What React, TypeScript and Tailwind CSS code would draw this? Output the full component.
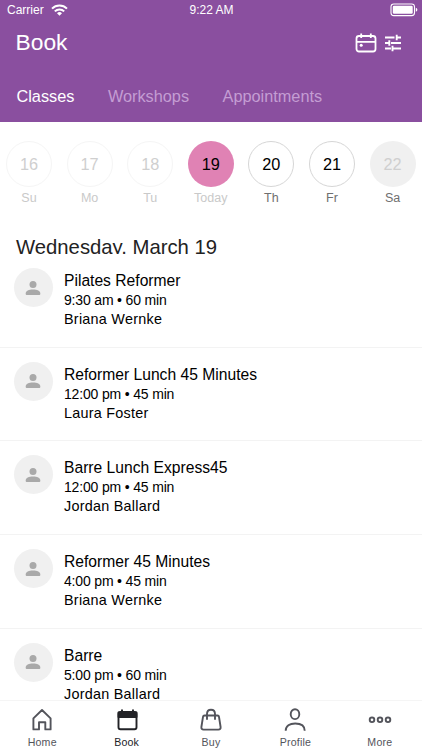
import type { ReactNode } from "react"

const days = [
  { num: 16, label: "Su", circle: "border border-[#f5f5f5] text-[#cfcfcf]", text: "text-[#c9c9c9]" },
  { num: 17, label: "Mo", circle: "border border-[#f5f5f5] text-[#cfcfcf]", text: "text-[#c9c9c9]" },
  { num: 18, label: "Tu", circle: "border border-[#f5f5f5] text-[#cfcfcf]", text: "text-[#c9c9c9]" },
  { num: 19, label: "Today", circle: "bg-[#e082b4] text-black", text: "text-[#c9c9c9]" },
  { num: 20, label: "Th", circle: "border border-[#d6d6d6] text-black", text: "text-[#6f6f6f]" },
  { num: 21, label: "Fr", circle: "border border-[#d6d6d6] text-black", text: "text-[#6f6f6f]" },
  { num: 22, label: "Sa", circle: "bg-[#f0f0f0] text-[#cfcfcf]", text: "text-[#6f6f6f]" },
]

const classes = [
  { name: "Pilates Reformer", time: "9:30 am • 60 min", teacher: "Briana Wernke" },
  { name: "Reformer Lunch 45 Minutes", time: "12:00 pm • 45 min", teacher: "Laura Foster" },
  { name: "Barre Lunch Express45", time: "12:00 pm • 45 min", teacher: "Jordan Ballard" },
  { name: "Reformer 45 Minutes", time: "4:00 pm • 45 min", teacher: "Briana Wernke" },
  { name: "Barre", time: "5:00 pm • 60 min", teacher: "Jordan Ballard" },
]

function StatusBar() {
  return (
    <div className="flex h-5 items-center justify-between text-[12px] leading-5">
      <div className="flex flex-1 items-center gap-[7px] pl-[7px]">
        <span>Carrier</span>
        <svg width="17" height="12" viewBox="0 0 17 12" fill="none" stroke="white" strokeWidth="2">
          <path d="M1 4.6a10.6 10.6 0 0 1 15 0" />
          <path d="M3.8 7.4a6.6 6.6 0 0 1 9.4 0" />
          <path d="M8.5 11.8 6 9.3a3.5 3.5 0 0 1 5 0z" fill="white" stroke="none" />
        </svg>
      </div>
      <span className="pr-[2px]">9:22 AM</span>
      <div className="flex flex-1 justify-end pr-[4px]">
        <svg width="28" height="14" viewBox="0 0 28 14">
          <rect x="1" y="1" width="23.5" height="11.6" rx="2.8" fill="none" stroke="white" strokeWidth="1.1" />
          <rect x="2.8" y="2.8" width="19.9" height="8" rx="1.2" fill="white" />
          <path d="M25.8 4.8q1.6.6 1.6 2t-1.6 2z" fill="white" />
        </svg>
      </div>
    </div>
  )
}

function PersonIcon() {
  return (
    <svg className="mr-px" width="16" height="18" viewBox="0 0 16 18" fill="#a9a9a9">
      <circle cx="8" cy="5.4" r="3.5" />
      <path d="M.7 14.2c0-2.3 3.2-3.7 7.3-3.7s7.3 1.4 7.3 3.7v.8q0 .9-.9.9H1.6q-.9 0-.9-.9z" />
    </svg>
  )
}

function NavItem({ label, active, children }: { label: string; active?: boolean; children: ReactNode }) {
  return (
    <button className={`flex flex-1 flex-col items-center ${active ? "text-[#222327]" : "text-[#53545b]"}`}>
      <svg width="24" height="24" viewBox="0 0 24 24" fill="none" stroke="currentColor" strokeWidth="1.9" strokeLinejoin="round">
        {children}
      </svg>
      <span className="mt-[4px] text-[10.6px] leading-3 tracking-[0.2px]">{label}</span>
    </button>
  )
}

export default function App() {
  return (
    <div className="flex h-[750px] w-[422px] flex-col overflow-hidden bg-white font-['Liberation_Sans',Arial,sans-serif] text-black">
      <header className="h-[122px] shrink-0 bg-[#8a4f9f] text-white">
        <StatusBar />
        <div className="flex h-[46px] items-center justify-between pr-[19px] pl-[15.5px]">
          <h1 className="pb-[2px] text-[22.8px] leading-7">Book</h1>
          <div className="flex items-center gap-[8px]">
            <svg width="22" height="20" viewBox="0 0 22 20" fill="none" stroke="white" strokeWidth="1.8">
              <rect x="1.5" y="3" width="19" height="15.5" rx="2.5" />
              <path d="M1.5 8.8h19M6.2.5V5M15.8.5V5" />
              <circle cx="6.2" cy="12.2" r="1.5" fill="white" stroke="none" />
            </svg>
            <svg className="-translate-x-px" width="18" height="18" viewBox="0 0 18 18" stroke="white" strokeWidth="1.9">
              <path d="M1 3.5h9.5M13.2 3.5H17M12.7.8v5.4M1 9h4M7 9h10M5.3 6.3v5.4M1 14.5h6M9 14.5h8M8.500 11.800v5.400" />
            </svg>
          </div>
        </div>
        <nav className="flex gap-[33.5px] pt-[19px] pl-[16.5px] text-[16.3px] leading-[22px]">
          <span>Classes</span>
          <span className="text-[#c49dd3]">Workshops</span>
          <span className="text-[#c49dd3]">Appointments</span>
        </nav>
      </header>

      <div className="flex shrink-0 gap-[14.6px] pt-[19px] pl-[6px]">
        {days.map((d) => (
          <div key={d.num} className="flex w-[46px] flex-col items-center">
            <div className={`flex size-[46px] items-center justify-center rounded-full pt-px text-[16.3px] ${d.circle}`}>{d.num}</div>
            <span className={`mt-[3px] text-[12.5px] leading-4 ${d.text}`}>{d.label}</span>
          </div>
        ))}
      </div>

      <h2 className="mt-[26px] h-[22px] shrink-0 overflow-hidden pl-4 text-[20.3px] leading-[30px] text-[#222]">
        Wednesday, March 19
      </h2>

      <ul className="min-h-0 flex-1 overflow-hidden">
        {classes.map((c, i) => (
          <li key={i} className="flex h-[93.7px] border-b border-[#f3f3f3] pt-[14px] pl-[14px]">
            <div className="flex size-[39px] shrink-0 items-center justify-center rounded-full bg-[#f0f0f0]">
              <PersonIcon />
            </div>
            <div className="ml-[11px] pt-[2px]">
              <p className="text-[15.65px] leading-[21px]">{c.name}</p>
              <p className="text-[14px] leading-[19px] tracking-[-0.17px]">{c.time}</p>
              <p className="text-[14.4px] leading-[19px] tracking-[0.25px]">{c.teacher}</p>
            </div>
          </li>
        ))}
      </ul>

      <nav className="flex h-[50px] shrink-0 border-t border-[#f5f5f5] bg-white pt-[7px]">
        <NavItem label="Home">
          <path d="M3.4 10.4 12 2l8.6 8.4v11h-5.3v-7.200H9v7.200H3.400z" />
        </NavItem>
        <NavItem label="Book" active>
          <rect x="3.5" y="4" width="18" height="17.3" rx="2" />
          <path d="M3.5 4.5h18V9h-18zM7 1.5v3M18 1.5v3" fill="currentColor" />
        </NavItem>
        <NavItem label="Buy">
          <path d="M5.5 7.5h13q1.3 0 1.5 1.3L21.6 19q.3 2.6-2.2 2.6H4.6q-2.500 0-2.200-2.600L4 8.800q.2-1.300 1.500-1.300zM8 11.800V6q0-4.300 4-4.300t4 4.300v5.800" />
        </NavItem>
        <NavItem label="Profile">
          <ellipse cx="12" cy="6.2" rx="4.3" ry="4.9" />
          <path d="M2.7 22.8c0-5 4-7.300 9.500-7.300s9.500 2.300 9.500 7.300" />
        </NavItem>
        <NavItem label="More">
          <circle cx="4" cy="11.8" r="2.3" />
          <circle cx="12" cy="11.8" r="2.3" />
          <circle cx="20" cy="11.8" r="2.3" />
        </NavItem>
      </nav>
    </div>
  )
}
